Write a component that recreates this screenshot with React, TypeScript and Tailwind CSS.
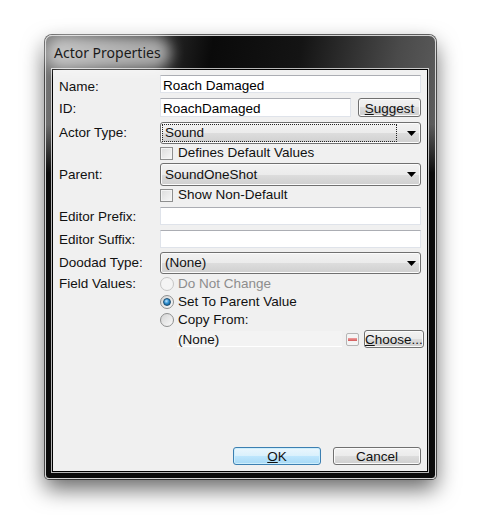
import type { ReactNode } from 'react';

const font = "font-['Liberation_Sans',Arial,sans-serif]";

// Win7 style button face
const face =
  'bg-[linear-gradient(to_bottom,#f2f2f2_0%,#ebebeb_50%,#dddddd_50%,#cfcfcf_100%)] shadow-[inset_0_0_0_1px_#fbfbfb]';

function TextBox({ value, className = '' }: { value?: string; className?: string }) {
  return (
    <div
      className={`flex items-center bg-white border border-[#dfe3ea] border-t-[#abadb3] pl-[2px] pt-[3px] text-black ${className}`}
    >
      {value}
    </div>
  );
}

function Arrow() {
  return (
    <svg width="9" height="5" viewBox="0 0 9 5" className="shrink-0">
      <path d="M0 0H9L4.5 5Z" fill="#000" />
    </svg>
  );
}

function Combo({ value, focused, className = '' }: { value: string; focused?: boolean; className?: string }) {
  return (
    <div className={`flex items-center rounded-[3px] border border-[#707070] pl-[1px] pr-[4px] ${face} ${className}`}>
      <div
        className={`flex flex-1 items-center self-stretch my-[1px] pl-[2px] mr-[10px] ${
          focused ? 'border border-dotted border-[#222]' : 'border border-transparent'
        }`}
      >
        {value}
      </div>
      <Arrow />
    </div>
  );
}

function Check({ label }: { label: string }) {
  return (
    <div className="flex h-[14px] items-center gap-[5px]">
      <div className="h-[13px] w-[13px] border border-[#8e8f8f] bg-[linear-gradient(135deg,#dcdcdc,#f7f7f7)] shadow-[inset_0_0_0_1px_#f4f4f4]" />
      <span>{label}</span>
    </div>
  );
}

function Radio({ label, state }: { label: string; state: 'disabled' | 'on' | 'off' }) {
  return (
    <div className="flex h-[16px] items-center gap-[4px]">
      <div
        className={`flex h-[14px] w-[14px] items-center justify-center rounded-full border ${
          state === 'disabled'
            ? 'border-[#c5c5c5] bg-[#f4f4f4]'
            : 'border-[#8e8f8f] bg-[linear-gradient(135deg,#d4d4d4,#fafafa)]'
        }`}
      >
        {state === 'on' && (
          <div className="h-[8px] w-[8px] rounded-full border border-[#1b4f73] bg-[radial-gradient(circle_at_40%_35%,#bfe6ff_0%,#2f8fd0_45%,#0b4a7c_100%)]" />
        )}
      </div>
      <span className={state === 'disabled' ? 'text-[#8d8d8d]' : ''}>{label}</span>
    </div>
  );
}

function Btn({ children, className = '', primary }: { children: ReactNode; className?: string; primary?: boolean }) {
  return (
    <div
      className={`flex items-center justify-center rounded-[3px] border pt-[2px] ${
        primary
          ? 'border-[#3c7fb1] bg-[linear-gradient(to_bottom,#eaf6fd_0%,#d9f0fc_50%,#bee6fd_50%,#a7d9f5_100%)] shadow-[inset_0_0_0_1px_#cdeefc]'
          : `border-[#707070] ${face}`
      } ${className}`}
    >
      {children}
    </div>
  );
}

function Row({
  label,
  children,
  className = '',
  labelClass = '',
}: {
  label?: string;
  children: ReactNode;
  className?: string;
  labelClass?: string;
}) {
  return (
    <div className={`flex items-center ${className}`}>
      <div className={`w-[101px] shrink-0 ${labelClass}`}>{label}</div>
      <div className="flex flex-1 items-center">{children}</div>
    </div>
  );
}

export default function App() {
  return (
    <div className={`h-[515px] w-[481px] bg-white pl-[45px] pt-[35px] ${font}`}>
      <div className="flex h-[444px] w-[391px] flex-col rounded-t-[7px] rounded-b-[4px] border border-[#d4d4d4] pl-[6px] pr-[7px] pb-[6px] shadow-[0_0_0_1px_rgba(0,0,0,0.6),0_10px_22px_rgba(0,0,0,0.6)] bg-[linear-gradient(to_bottom,rgba(10,10,10,0)_0%,rgba(10,10,10,0)_20%,#0b0b0b_31%),linear-gradient(100deg,#7a7a7a_0%,#4a4a4a_14%,#0a0a0a_36%,#141414_55%,#4a4a4a_76%,#727272_100%)]">
        <div className="flex h-[33px] items-center pl-[2px]">
          <div className="relative">
            <div className="absolute -left-[8px] -right-[10px] -top-[5px] -bottom-[5px] rounded-full bg-white/60 blur-[7px]" />
            <span className="relative font-['Noto_Sans',sans-serif] text-[14px] text-[#1a1a1a]">Actor Properties</span>
          </div>
        </div>

        <div className="flex flex-1 flex-col border border-black bg-[#f0f0f0] px-[6px] pt-[5px] pb-[6px] text-[13.5px] leading-none text-[#111] shadow-[0_0_0_1px_rgba(255,255,255,0.7)]">
          <Row label="Name:" className="h-[18px]" labelClass="pt-[5px]">
            <TextBox value="Roach Damaged" className="h-[18px] flex-1" />
          </Row>
          <Row label="ID:" className="mt-[4px] h-[20px]" labelClass="pt-[3px]">
            <TextBox value="RoachDamaged" className="h-[19px] w-[191px]" />
            <Btn className="ml-[7px] mt-[1px] h-[19px] flex-1">
              <span>
                <span className="underline">S</span>uggest
              </span>
            </Btn>
          </Row>
          <Row label="Actor Type:" className="mt-[5px] h-[22px]">
            <Combo value="Sound" focused className="h-[22px] flex-1" />
          </Row>
          <Row className="mt-[2px] h-[14px]">
            <Check label="Defines Default Values" />
          </Row>
          <Row label="Parent:" className="mt-[3px] h-[23px]">
            <Combo value="SoundOneShot" className="h-[23px] flex-1" />
          </Row>
          <Row className="mt-[2px] h-[14px]">
            <Check label="Show Non-Default" />
          </Row>
          <Row label="Editor Prefix:" className="mt-[5px] h-[18px]" labelClass="pt-[2px]">
            <TextBox className="h-[18px] flex-1" />
          </Row>
          <Row label="Editor Suffix:" className="mt-[5px] h-[18px]" labelClass="pt-[2px]">
            <TextBox className="h-[18px] flex-1" />
          </Row>
          <Row label="Doodad Type:" className="mt-[4px] h-[22px]">
            <Combo value="(None)" className="h-[22px] flex-1" />
          </Row>
          <Row label="Field Values:" className="mt-[2px] h-[16px]">
            <Radio label="Do Not Change" state="disabled" />
          </Row>
          <Row className="mt-[2px] h-[16px]">
            <Radio label="Set To Parent Value" state="on" />
          </Row>
          <Row className="mt-[2px] h-[16px]">
            <Radio label="Copy From:" state="off" />
          </Row>
          <Row className="mt-[2px] h-[18px]">
            <div className="ml-[17px] flex h-[16px] w-[165px] items-center border-b border-white bg-[#f3f3f3] pl-[1px] pt-[3px]">
              (None)
            </div>
            <div className="ml-[4px] flex h-[13px] w-[13px] items-center justify-center rounded-[2px] border border-[#b5b5b5] bg-[#f4f4f4]">
              <div className="h-[3px] w-[9px] bg-[linear-gradient(to_bottom,#f0a0a0,#d05858)]" />
            </div>
            <Btn className="ml-[5px] h-[18px] flex-1">
              <span>
                <span className="underline">C</span>hoose...
              </span>
            </Btn>
          </Row>

          <div className="flex-1" />
          <div className="flex justify-end gap-[12px]">
            <Btn primary className="h-[18px] w-[88px]">
              <span>
                <span className="underline">O</span>K
              </span>
            </Btn>
            <Btn className="h-[18px] w-[88px]">Cancel</Btn>
          </div>
        </div>
      </div>
    </div>
  );
}
